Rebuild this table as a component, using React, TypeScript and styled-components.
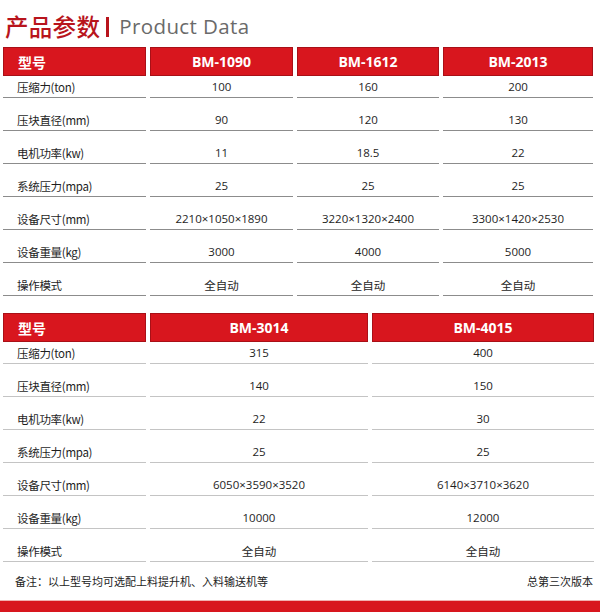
import React from "react";
import styled, { createGlobalStyle } from "styled-components";

const GlobalStyle = createGlobalStyle`
  html, body {
    margin: 0;
    padding: 0;
    background: #ffffff;
  }
  body {
    font-family: "Noto Sans CJK SC", "Open Sans", sans-serif;
    color: #1e1e1e;
  }
`;

interface ITable {
  columns: string;
  line: string;
  heads: string[];
  rows: string[][];
}

const tableOne: ITable = {
  columns: "143px 143px 142px 150px",
  line: "#8c8c8c",
  heads: ["型号", "BM-1090", "BM-1612", "BM-2013"],
  rows: [
    ["压缩力(ton)", "100", "160", "200"],
    ["压块直径(mm)", "90", "120", "130"],
    ["电机功率(kw)", "11", "18.5", "22"],
    ["系统压力(mpa)", "25", "25", "25"],
    ["设备尺寸(mm)", "2210×1050×1890", "3220×1320×2400", "3300×1420×2530"],
    ["设备重量(kg)", "3000", "4000", "5000"],
    ["操作模式", "全自动", "全自动", "全自动"],
  ],
};

const tableTwo: ITable = {
  columns: "143px 218px 222px",
  line: "#c4c4c4",
  heads: ["型号", "BM-3014", "BM-4015"],
  rows: [
    ["压缩力(ton)", "315", "400"],
    ["压块直径(mm)", "140", "150"],
    ["电机功率(kw)", "22", "30"],
    ["系统压力(mpa)", "25", "25"],
    ["设备尺寸(mm)", "6050×3590×3520", "6140×3710×3620"],
    ["设备重量(kg)", "10000", "12000"],
    ["操作模式", "全自动", "全自动"],
  ],
};

const SpecTable: React.FC<{ data: ITable }> = ({ data }) => (
  <Table>
    <Row columns={data.columns}>
      {data.heads.map((h, i) => (
        <Head key={h} first={i === 0}>
          {h}
        </Head>
      ))}
    </Row>
    <Body>
      {data.rows.map((row) => (
        <Row key={row[0]} columns={data.columns}>
          {row.map((cell, i) => (
            <Cell key={i} first={i === 0} line={data.line}>
              {cell}
            </Cell>
          ))}
        </Row>
      ))}
    </Body>
  </Table>
);

const App: React.FC = () => (
  <Page>
    <GlobalStyle />
    <Title>
      <TitleCn>产品参数</TitleCn>
      <TitleBar />
      <TitleEn>Product Data</TitleEn>
    </Title>
    <SpecTable data={tableOne} />
    <Spacer />
    <SpecTable data={tableTwo} />
    <Footer>
      <span>备注：以上型号均可选配上料提升机、入料输送机等</span>
      <span>总第三次版本</span>
    </Footer>
    <BottomBar />
  </Page>
);

const Page = styled.div`
  width: 600px;
  height: 613px;
  overflow: hidden;
  display: flex;
  flex-direction: column;
  padding-left: 3px;
  box-sizing: border-box;
`;

const Title = styled.div`
  height: 47px;
  display: flex;
  align-items: center;
  padding: 6px 0 0 2px;
  box-sizing: border-box;
  line-height: 1;
`;

const TitleCn = styled.span`
  font-size: 23.5px;
  font-weight: 500;
  color: #b8141c;
  letter-spacing: 0.3px;
`;

const TitleBar = styled.span`
  width: 3px;
  height: 20px;
  background: #b8141c;
  margin: 0 10px 0 6px;
`;

const TitleEn = styled.span`
  font-family: "Open Sans", sans-serif;
  font-size: 20.5px;
  color: #6a6a6a;
  letter-spacing: 0.4px;
`;

const Table = styled.div`
  display: flex;
  flex-direction: column;
`;

const Body = styled.div`
  display: flex;
  flex-direction: column;
  gap: 11px;
`;

const Row = styled.div<{ columns: string }>`
  display: grid;
  grid-template-columns: ${(p) => p.columns};
  column-gap: 4px;
`;

const Head = styled.div<{ first: boolean }>`
  height: 29px;
  box-sizing: border-box;
  background: #d8161e;
  border: 1px solid #a91017;
  color: #ffffff;
  font-family: "Open Sans", "Noto Sans CJK SC", sans-serif;
  font-weight: 700;
  font-size: 14px;
  display: flex;
  align-items: center;
  justify-content: ${(p) => (p.first ? "flex-start" : "center")};
  padding-left: ${(p) => (p.first ? "14px" : "0")};
`;

const Cell = styled.div<{ first: boolean; line: string }>`
  height: 22px;
  box-sizing: border-box;
  border-bottom: 1px solid ${(p) => p.line};
  font-size: 11.5px;
  display: flex;
  align-items: center;
  justify-content: ${(p) => (p.first ? "flex-start" : "center")};
  padding-left: ${(p) => (p.first ? "14px" : "0")};
  font-family: ${(p) =>
    p.first
      ? `"Noto Sans CJK SC", sans-serif`
      : `"Open Sans", "Noto Sans CJK SC", sans-serif`};
  letter-spacing: ${(p) => (p.first ? "-0.3px" : "0")};
`;

const Spacer = styled.div`
  height: 17px;
`;

const Footer = styled.div`
  display: flex;
  justify-content: space-between;
  align-items: center;
  height: 38px;
  padding: 0 7px 0 12px;
  font-size: 11px;
  color: #222;
`;

const BottomBar = styled.div`
  margin-left: -3px;
  height: 11px;
  background: #d8161e;
  border-top: 1px solid #f0b0b0;
`;

export default App;
